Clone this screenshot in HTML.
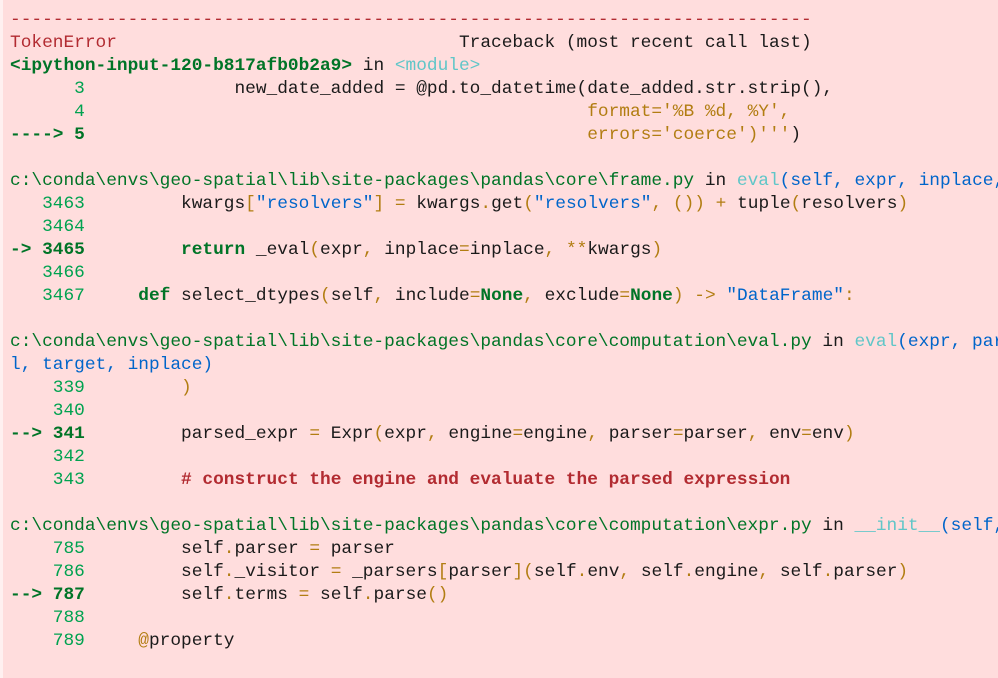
<!DOCTYPE html>
<html><head><meta charset="utf-8"><style>
html,body{margin:0;padding:0;background:#ffdddd;width:998px;height:678px;overflow:hidden}
body{border-left:3px solid #fff0f0;box-sizing:border-box}
pre{margin:0;padding:9px 0 0 7px;width:988px;overflow:hidden;font-family:"Liberation Mono",monospace;font-size:17.82px;line-height:23px;color:#1a1a1a;white-space:pre}
.r{color:#b22b31}.rb{color:#b22b31;font-weight:bold}
.g{color:#007427;font-weight:bold}.gp{color:#007427}
.n{color:#00a250}
.c{color:#60c6c8}.b{color:#0065ca}.bb{color:#0065ca;font-weight:bold}
.o{color:#b27d12}
</style></head><body><pre><span class="r">---------------------------------------------------------------------------</span>
<span class="r">TokenError</span>                                Traceback (most recent call last)
<span class="g">&lt;ipython-input-120-b817afb0b2a9&gt;</span> in <span class="c">&lt;module&gt;</span>
<span class="n">      3</span>              new_date_added = @pd.to_datetime(date_added.str.strip(),
<span class="n">      4</span>                                               <span class="o">format='%B %d, %Y',</span>
<span class="g">----&gt; 5</span>                                               <span class="o">errors='coerce')'''</span>)

<span class="gp">c:\conda\envs\geo-spatial\lib\site-packages\pandas\core\frame.py</span> in <span class="c">eval</span><span class="b">(self, expr, inplace, **kwargs)</span>
<span class="n">   3463</span>         kwargs<span class="o">[</span><span class="b">"resolvers"</span><span class="o">]</span> <span class="o">=</span> kwargs<span class="o">.</span>get<span class="o">(</span><span class="b">"resolvers"</span><span class="o">,</span> <span class="o">())</span> <span class="o">+</span> tuple<span class="o">(</span>resolvers<span class="o">)</span>
<span class="n">   3464</span>
<span class="g">-&gt; 3465</span>         <span class="g">return</span> _eval<span class="o">(</span>expr<span class="o">,</span> inplace<span class="o">=</span>inplace<span class="o">,</span> <span class="o">**</span>kwargs<span class="o">)</span>
<span class="n">   3466</span>
<span class="n">   3467</span>     <span class="g">def</span> select_dtypes<span class="o">(</span>self<span class="o">,</span> include<span class="o">=</span><span class="g">None</span><span class="o">,</span> exclude<span class="o">=</span><span class="g">None</span><span class="o">)</span> <span class="o">-&gt;</span> <span class="b">"DataFrame"</span><span class="o">:</span>

<span class="gp">c:\conda\envs\geo-spatial\lib\site-packages\pandas\core\computation\eval.py</span> in <span class="c">eval</span><span class="b">(expr, parser, engine, truediv, loca</span>
<span class="b">l, target, inplace)</span>
<span class="n">    339</span>         <span class="o">)</span>
<span class="n">    340</span>
<span class="g">--&gt; 341</span>         parsed_expr <span class="o">=</span> Expr<span class="o">(</span>expr<span class="o">,</span> engine<span class="o">=</span>engine<span class="o">,</span> parser<span class="o">=</span>parser<span class="o">,</span> env<span class="o">=</span>env<span class="o">)</span>
<span class="n">    342</span>
<span class="n">    343</span>         <span class="rb"># construct the engine and evaluate the parsed expression</span>

<span class="gp">c:\conda\envs\geo-spatial\lib\site-packages\pandas\core\computation\expr.py</span> in <span class="c">__init__</span><span class="b">(self, expr, engine, parser, env)</span>
<span class="n">    785</span>         self<span class="o">.</span>parser <span class="o">=</span> parser
<span class="n">    786</span>         self<span class="o">.</span>_visitor <span class="o">=</span> _parsers<span class="o">[</span>parser<span class="o">](</span>self<span class="o">.</span>env<span class="o">,</span> self<span class="o">.</span>engine<span class="o">,</span> self<span class="o">.</span>parser<span class="o">)</span>
<span class="g">--&gt; 787</span>         self<span class="o">.</span>terms <span class="o">=</span> self<span class="o">.</span>parse<span class="o">()</span>
<span class="n">    788</span>
<span class="n">    789</span>     <span class="o">@</span>property
</pre></body></html>
